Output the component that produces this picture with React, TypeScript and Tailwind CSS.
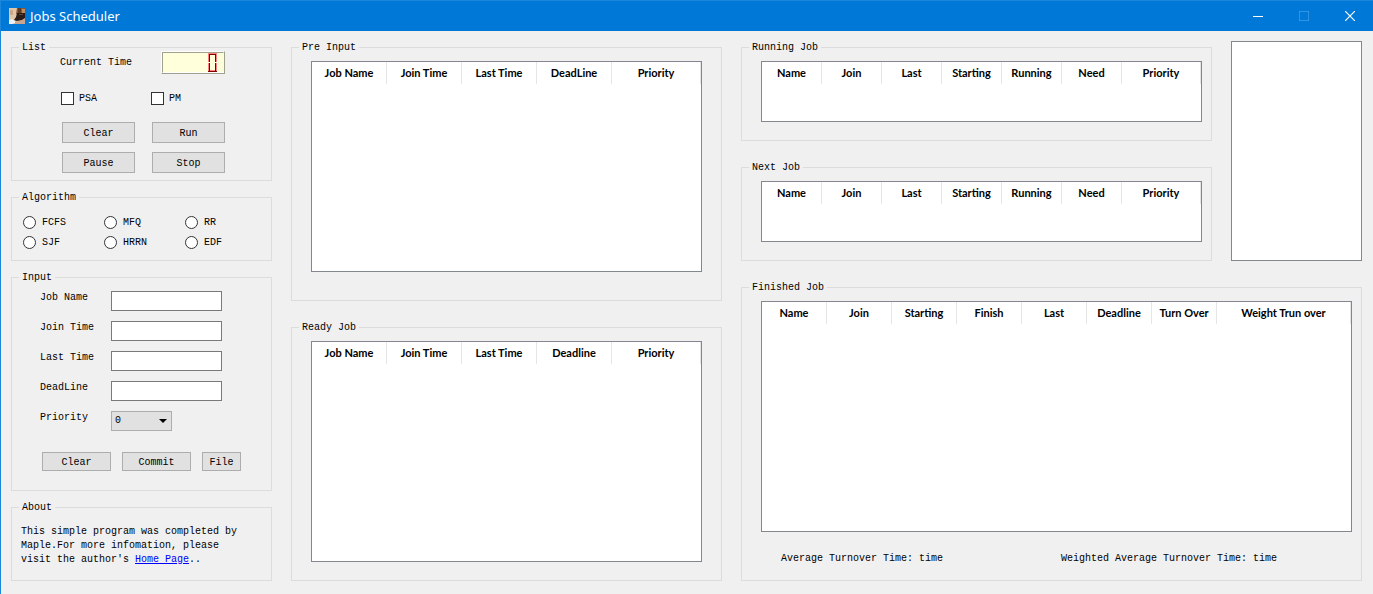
import type { ReactNode } from "react";

const MONO = "font-['Liberation_Mono','Noto_Sans_CJK_SC',monospace]";

function Group({ title, className = "", children }: { title: string; className?: string; children: ReactNode }) {
  return (
    <fieldset className={`flex min-w-0 flex-col border border-[#dcdcdc] ${className}`}>
      <legend className="ml-[7px] px-[3px] leading-[13px]">{title}</legend>
      {children}
    </fieldset>
  );
}

function PushButton({ className, children }: { className: string; children: ReactNode }) {
  return (
    <button type="button" className={`border border-[#adadad] bg-[#e1e1e1] pt-[2px] leading-none hover:border-[#0078d7] hover:bg-[#e5f1fb] ${className}`}>
      {children}
    </button>
  );
}

function JobTable({ label, columns, colClass, className = "" }: { label: string; columns: string[]; colClass: string; className?: string }) {
  return (
    <div className={`mt-[7px] ml-[19px] grow border border-[#828790] bg-white ${className}`}>
      <table aria-label={label} className="w-full table-fixed border-separate border-spacing-0 font-['Lato',sans-serif] text-[11px] leading-[22px]">
        <colgroup>
          {columns.map((c, i) => (
            <col key={c} className={i < columns.length - 1 ? colClass : ""} />
          ))}
        </colgroup>
        <thead>
          <tr>
            {columns.map((c) => (
              <th key={c} scope="col" className="border-r border-[#e5e5e5] p-0 text-center font-bold whitespace-nowrap">
                {c}
              </th>
            ))}
          </tr>
        </thead>
        <tbody />
      </table>
    </div>
  );
}

function AppIcon() {
  return (
    <svg viewBox="0 0 16 16" className="size-4" aria-hidden="true">
      <rect width="16" height="16" fill="#d8b597" />
      <path d="M0 0h8v10l-4 3H0z" fill="#e2c6a8" />
      <path d="M1 2h3v5H1z" fill="#cfa784" />
      <path d="M8 0h8v6H7z" fill="#8a5a38" />
      <path d="M9 0h3v5H9z" fill="#5b3a28" />
      <path d="M13 1h3v4h-3z" fill="#c08c5f" />
      <path d="M8 5h8v5l-3 2-5 1-3-1 2-3z" fill="#2a1d1a" />
      <path d="M10 6h4v1h-4z" fill="#644330" />
      <path d="M0 12l3-1 3 2v2l-3 1H0z" fill="#edf2f8" />
      <path d="M6 14l6-1 4-2v5H6z" fill="#c9a692" />
    </svg>
  );
}

function TitleBar() {
  return (
    <header className="flex h-[31px] items-center border-t border-[#1a86dc] bg-[#0078d7] pb-px pl-2 text-white">
      <AppIcon />
      <h1 className="ml-[5px] font-['Noto_Sans',sans-serif] text-[13px] leading-4">Jobs Scheduler</h1>
      <div className="ml-auto flex self-stretch">
        <button type="button" aria-label="Minimize" className="flex w-[46px] items-center justify-center">
          <svg width="10" height="10" viewBox="0 0 10 10" stroke="currentColor" shapeRendering="crispEdges"><path d="M0 5.5h10" /></svg>
        </button>
        <button type="button" aria-label="Maximize" disabled className="flex w-[46px] items-center justify-center text-[#3393df]">
          <svg width="10" height="10" viewBox="0 0 10 10" fill="none" stroke="currentColor" shapeRendering="crispEdges"><path d="M.5.5h9v9h-9z" /></svg>
        </button>
        <button type="button" aria-label="Close" className="flex w-[46px] items-center justify-center">
          <svg width="10" height="10" viewBox="0 0 10 10" stroke="currentColor" strokeWidth="1.2"><path d="M0 0l10 10M10 0L0 10" /></svg>
        </button>
      </div>
    </header>
  );
}

function Lcd() {
  return (
    <div role="img" aria-label="Current time: 0" className="h-[23px] w-16 border border-t-white border-r-[#a0a08c] border-b-[#a0a08c] border-l-white">
      <div className="flex h-full justify-end border border-t-[#a0a08c] border-r-[#ffffdc] border-b-white border-l-[#a0a08c] bg-[#ffffdc] pr-1.5">
        <svg width="9" height="19" viewBox="0 0 9 19" shapeRendering="crispEdges">
          <path d="M0 0h9v1H0zM0 1h1v8H0zM8 1h1v8H8zM0 10h1v8H0zM8 10h1v8H8zM2 17h5v1H2z" fill="#ff8080" />
          <path d="M1 1h7v1H1zM1 2h1v7H1zM7 2h1v7H7zM1 10h1v8H1zM7 10h1v8H7zM0 18h9v1H0z" fill="#800000" />
        </svg>
      </div>
    </div>
  );
}

function Check({ label }: { label: string }) {
  return (
    <label className="flex w-[90px] items-center gap-[5px] leading-[13px]">
      <input type="checkbox" className="size-[13px] appearance-none border border-[#333] bg-white checked:bg-[#0078d7]" />
      {label}
    </label>
  );
}

function Radio({ label }: { label: string }) {
  return (
    <label className="flex items-center gap-[6px] leading-[13px]">
      <input type="radio" name="algorithm" className="size-[13px] appearance-none rounded-full border border-[#333] bg-white checked:border-4" />
      {label}
    </label>
  );
}

const fields = [
  { id: "job-name", label: "Job Name" },
  { id: "join-time", label: "Join Time" },
  { id: "last-time", label: "Last Time" },
  { id: "deadline", label: "DeadLine" },
];

function ControlColumn() {
  return (
    <div className="flex flex-col gap-[10px]">
      <Group title="List" className="pb-[7px]">
        <div className="-mt-[3px] flex gap-[29px] pl-12">
          <span className="pt-1 leading-4">Current Time</span>
          <Lcd />
        </div>
        <div className="mt-[18px] flex pl-[49px]">
          <Check label="PSA" />
          <Check label="PM" />
        </div>
        <div className="mt-[17px] grid grid-cols-[73px_73px] gap-x-[17px] gap-y-[9px] pl-[50px]">
          {["Clear", "Run", "Pause", "Stop"].map((t) => (
            <PushButton key={t} className="h-[21px]">{t}</PushButton>
          ))}
        </div>
      </Group>

      <Group title="Algorithm" className="pb-[11px]">
        <div className="mt-3 grid grid-cols-3 gap-y-[7px] pr-[5px] pl-[11px]">
          {["FCFS", "MFQ", "RR", "SJF", "HRRN", "EDF"].map((t) => (
            <Radio key={t} label={t} />
          ))}
        </div>
      </Group>

      <Group title="Input" className="pb-[19px]">
        <div className="mt-[7px] grid grid-cols-[71px_111px] gap-y-[10px] pl-7">
          {fields.map((f) => (
            <div key={f.id} className="contents">
              <label htmlFor={f.id} className="leading-[14px]">{f.label}</label>
              <input id={f.id} type="text" className="h-5 min-w-0 border border-[#7a7a7a] bg-white px-1 outline-none focus:border-[#0078d7]" />
            </div>
          ))}
          <label htmlFor="priority" className="leading-[14px]">Priority</label>
          <div className="relative w-[61px]">
            <select id="priority" defaultValue="0" className="block h-5 w-full appearance-none border border-[#adadad] bg-[#e1e1e1] px-[3px] leading-[18px]">
              {["0", "1", "2", "3", "4"].map((v) => (
                <option key={v}>{v}</option>
              ))}
            </select>
            <svg width="8" height="4" viewBox="0 0 8 4" className="pointer-events-none absolute top-2 right-[5px]" aria-hidden="true">
              <path d="M0 0h8L4 4z" />
            </svg>
          </div>
        </div>
        <div className="mt-[21px] flex gap-[11px] pl-[30px]">
          <PushButton className="h-[19px] w-[69px]">Clear</PushButton>
          <PushButton className="h-[19px] w-[69px]">Commit</PushButton>
          <PushButton className="h-[19px] w-[39px]">File</PushButton>
        </div>
      </Group>

      <Group title="About" className="pb-[13px]">
        <p className="mt-[11px] pr-6 pl-[9px] leading-[14px]">
          This simple program was completed by Maple.For more infomation, please visit the author's{" "}
          <a href="#home" className="text-[#0000ff] underline">Home Page</a>..
        </p>
      </Group>
    </div>
  );
}

const preColumns = ["Job Name", "Join Time", "Last Time", "DeadLine", "Priority"];
const readyColumns = ["Job Name", "Join Time", "Last Time", "Deadline", "Priority"];
const jobColumns = ["Name", "Join", "Last", "Starting", "Running", "Need", "Priority"];
const finishedColumns = ["Name", "Join", "Starting", "Finish", "Last", "Deadline", "Turn Over", "Weight Trun over"];

export default function App() {
  return (
    <div className={`flex min-h-screen flex-col border-l border-[#1a86dc] bg-[#f0f0f0] text-[10px] text-black ${MONO}`}>
      <TitleBar />
      <main className="grid grow grid-cols-[261px_minmax(0,431fr)_minmax(0,621fr)] gap-x-[19px] pt-[10px] pr-[11px] pb-[13px] pl-[10px]">
        <ControlColumn />

        <div className="grid grid-rows-2 gap-5">
          <Group title="Pre Input" className="pb-7">
            <JobTable label="Pre Input" columns={preColumns} colClass="w-[75px]" className="mr-[19px]" />
          </Group>
          <Group title="Ready Job" className="pb-[18px]">
            <JobTable label="Ready Job" columns={readyColumns} colClass="w-[75px]" className="mr-[19px]" />
          </Group>
        </div>

        <div className="flex flex-col gap-5">
          <div className="flex gap-[19px]">
            <div className="flex min-w-0 grow flex-col gap-5">
              {["Running Job", "Next Job"].map((t) => (
                <Group key={t} title={t} className="pb-[18px]">
                  <JobTable label={t} columns={jobColumns} colClass="w-[60px]" className="mr-[9px] min-h-[61px]" />
                </Group>
              ))}
            </div>
            <div role="log" aria-label="Messages" className="w-[131px] shrink-0 border border-[#828790] bg-white" />
          </div>
          <Group title="Finished Job" className="grow pb-[14px]">
            <JobTable label="Finished Job" columns={finishedColumns} colClass="w-[65px]" className="mr-[9px]" />
            <div className="mt-5 grid grid-cols-[280px_1fr] pl-[39px] leading-[14px]">
              <span>Average Turnover Time: time</span>
              <span>Weighted Average Turnover Time: time</span>
            </div>
          </Group>
        </div>
      </main>
    </div>
  );
}
